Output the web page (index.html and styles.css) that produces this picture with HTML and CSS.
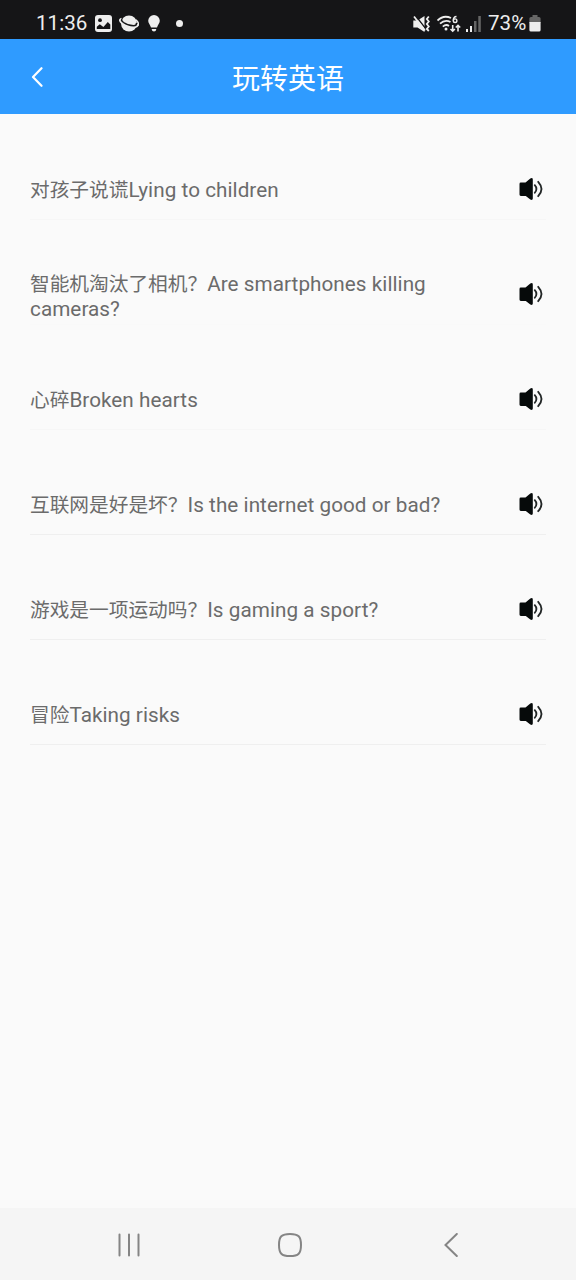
FILE: index.html
```html
<!DOCTYPE html>
<html lang="zh-CN">
<head>
<meta charset="utf-8">
<title>玩转英语</title>
<link rel="stylesheet" href="styles.css">
</head>
<body>
<svg class="defs" width="0" height="0">
  <symbol id="speaker" viewBox="0 0 26 26">
    <path d="M1.500 8Q1.500 6.600 2.800 6.600H7.500L12.300 2.600Q14.600 1.300 14.800 3.400V22.600Q14.600 24.700 12.300 23.400L7.800 20H2.800Q1.500 20 1.500 18.600Z" fill="#060a0a"/>
    <path d="M16.800 9.200Q20 12.800 16.800 16.800M20.200 5.800Q26.800 13 20.200 20.200" fill="none" stroke="#222626" stroke-width="1.800" stroke-linecap="round"/>
  </symbol>
</svg>
<div class="screen">
  <header class="status">
    <div class="status-left">
      <span class="clock">11:36</span>
      <svg class="ic-image" width="17" height="17" viewBox="0 0 17 17"><rect width="17" height="17" rx="3" fill="#eee"/><circle cx="5" cy="5.200" r="1.900" fill="#151517"/><path d="M1.800 11.800 4.800 9.200 8.400 12 12.800 7 15.300 9.600V14H1.800Z" fill="#151517"/></svg>
      <svg class="ic-planet" width="20" height="17" viewBox="0 0 20 17"><circle cx="10" cy="8.500" r="8" fill="#eee"/><path d="M2.500 3.500Q-1 5 3 8.300 8 12.300 14.500 12.200 19.500 12 18.700 9" fill="none" stroke="#eee" stroke-width="1.800"/><path d="M3.300 4.500Q1.500 5 4.500 7.500 9 10.700 14.500 10.700 18.300 10.400 17.200 8" fill="none" stroke="#151517" stroke-width="1.500"/><path d="M16.800 4.800Q20.500 8 19 10.500" fill="none" stroke="#eee" stroke-width="1.500"/></svg>
      <svg class="ic-bulb" width="12" height="17" viewBox="0 0 12 17"><path d="M6 0a5.800 5.800 0 0 1 5.800 5.800c0 2.800-2.100 3.900-2.800 6.800H3C2.300 9.700.2 8.600.2 5.800A5.800 5.800 0 0 1 6 0ZM3.600 14H8.400Q8 16.600 6 16.600T3.600 14Z" fill="#eee"/></svg>
      <span class="dot"></span>
    </div>
    <div class="status-right">
      <svg class="ic-mute" width="17" height="18" viewBox="0 0 17 18"><path d="M.3 5.500H4.500L11.500 1V17L4.500 12.500H.3Z" fill="#eee"/><path d="M2.500.5 12.500 13.500" stroke="#151517" stroke-width="1.300"/><path d="M1 1.500 12 15.500" stroke="#eee" stroke-width="1.800"/><path d="M15.800 1.500l-2 2.500 2 2.500-2 2.500 2 2.500-2 2.500 2 2" fill="none" stroke="#eee" stroke-width="1.800"/></svg>
      <svg class="ic-wifi" width="24" height="18" viewBox="0 0 24 18"><path d="M.5 5.500Q6.500-.5 14 3M3 8.700Q8 4 13.500 7M5.800 11.700Q9 8.800 12 11" fill="none" stroke="#eee" stroke-width="1.800"/><circle cx="9" cy="14" r="1.500" fill="#eee"/><path d="M19.500 1.500Q16.500 1.500 16.300 5.500M15.700 10v6M13.500 14l2.200 2.200 2.200-2.200M21 16.500v-6M18.800 12.500l2.200-2.200 2.200 2.200" fill="none" stroke="#eee" stroke-width="1.600"/><circle cx="18.100" cy="5.700" r="1.800" fill="none" stroke="#eee" stroke-width="1.400"/></svg>
      <svg class="ic-signal" width="15" height="16" viewBox="0 0 15 16"><path d="M0 13h2v3H0ZM4 10h2v6H4Z" fill="#eee"/><path d="M8 5h2.500v11H8ZM12.300 0h2.500v16h-2.500Z" fill="#666"/></svg>
      <span class="percent">73%</span>
      <svg class="ic-battery" width="12" height="17" viewBox="0 0 12 17"><path d="M3.500 0h5v2H10a1.600 1.600 0 0 1 1.600 1.600V8H.4V3.600A1.600 1.600 0 0 1 2 2h1.500Z" fill="#666"/><path d="M.4 7h11.200v8a1.600 1.600 0 0 1-1.600 1.600H2A1.600 1.600 0 0 1 .4 15Z" fill="#eee"/></svg>
    </div>
  </header>
  <div class="titlebar">
    <svg class="back" width="12" height="20" viewBox="0 0 12 20"><path d="M10.500 1.200 2 10l8.500 8.800" fill="none" stroke="#fff" stroke-width="2.200" stroke-linecap="round" stroke-linejoin="round"/></svg>
    <h1 class="title">玩转英语</h1>
  </div>
  <main class="list">
    <div class="row faint"><p class="label"><span class="zh">对孩子说谎</span>Lying to children</p><svg class="speaker"><use href="#speaker"/></svg></div>
    <div class="row faintest"><p class="label two-line"><span class="zh">智能机淘汰了相机？</span>Are smartphones killing cameras?</p><svg class="speaker"><use href="#speaker"/></svg></div>
    <div class="row faint"><p class="label"><span class="zh">心碎</span>Broken hearts</p><svg class="speaker"><use href="#speaker"/></svg></div>
    <div class="row"><p class="label"><span class="zh">互联网是好是坏？</span>Is the internet good or bad?</p><svg class="speaker"><use href="#speaker"/></svg></div>
    <div class="row"><p class="label"><span class="zh">游戏是一项运动吗？</span>Is gaming a sport?</p><svg class="speaker"><use href="#speaker"/></svg></div>
    <div class="row"><p class="label"><span class="zh">冒险</span>Taking risks</p><svg class="speaker"><use href="#speaker"/></svg></div>
  </main>
  <nav class="navbar">
    <svg class="nav-recent" width="24" height="24" viewBox="0 0 24 24"><path d="M2.500 1.500v21M12 1.500v21M21.500 1.500v21" stroke="#858585" stroke-width="2" stroke-linecap="round"/></svg>
    <svg class="nav-home" width="24" height="24" viewBox="0 0 24 24"><path d="M12 1C20.500 1 23 3.500 23 12S20.500 23 12 23 1 20.500 1 12 3.500 1 12 1Z" fill="none" stroke="#858585" stroke-width="2"/></svg>
    <svg class="nav-back" width="14" height="24" viewBox="0 0 14 24"><path d="M12.800 1 1.500 12l11.300 11" fill="none" stroke="#858585" stroke-width="2" stroke-linecap="round"/></svg>
  </nav>
</div>
</body>
</html>
```
FILE: styles.css
```css
body {
  margin: 0;
  font-family: Roboto, "Noto Sans CJK SC", sans-serif;
}
.defs { display: block; }
.screen {
  display: flex;
  flex-direction: column;
  width: 576px;
  height: 1280px;
  background: #fafafa;
}
.status {
  display: flex;
  justify-content: space-between;
  height: 39px;
  box-sizing: border-box;
  padding: 8px 35px 0 36px;
  background: #151517;
  color: #eee;
  font-size: 20.6px;
  line-height: 31px;
}
.status-left, .status-right {
  display: flex;
  align-items: center;
}
.clock { width: 59px; }
.ic-planet { margin-left: 7px; }
.ic-bulb { margin-left: 9px; }
.dot {
  width: 7px;
  height: 7px;
  margin-left: 16px;
  border-radius: 50%;
  background: #eee;
}
.ic-wifi { margin-left: 7px; }
.ic-signal { margin-left: 5px; }
.percent { width: 41px; margin-left: 7px; }
.titlebar {
  display: grid;
  grid-template-columns: 1fr auto 1fr;
  align-items: center;
  height: 75px;
  background: #2f9bff;
}
.back { margin-left: 31px; }
.title {
  margin: 0;
  padding-top: 6px;
  color: #fff;
  font-size: 28px;
  font-weight: 400;
  line-height: 40px;
}
.list { flex: 1; }
.row {
  display: flex;
  align-items: center;
  justify-content: space-between;
  height: 105px;
  box-sizing: border-box;
  margin: 0 30px;
  padding: 44px 2px 0 0;
  border-bottom: 1px solid #efefef;
}
.row:first-child { height: 106px; }
.faint { border-color: #f6f6f6; }
.faintest { border-color: #f9f9f9; }
.label {
  width: 420px;
  margin: 0;
  padding-top: 3px;
  color: #6b6b6b;
  font-size: 20.7px;
  line-height: 25px;
  letter-spacing: 0.05px;
}
.two-line { padding-top: 6px; }
.zh { font-size: 19.7px; letter-spacing: 0; }
.speaker { width: 26px; height: 26px; }
.navbar {
  display: flex;
  align-items: center;
  height: 72px;
  box-sizing: border-box;
  padding: 2px 0 0 117px;
  background: #f5f5f5;
}
.nav-home { margin-left: 137px; }
.nav-back { margin-left: 142px; }
```
